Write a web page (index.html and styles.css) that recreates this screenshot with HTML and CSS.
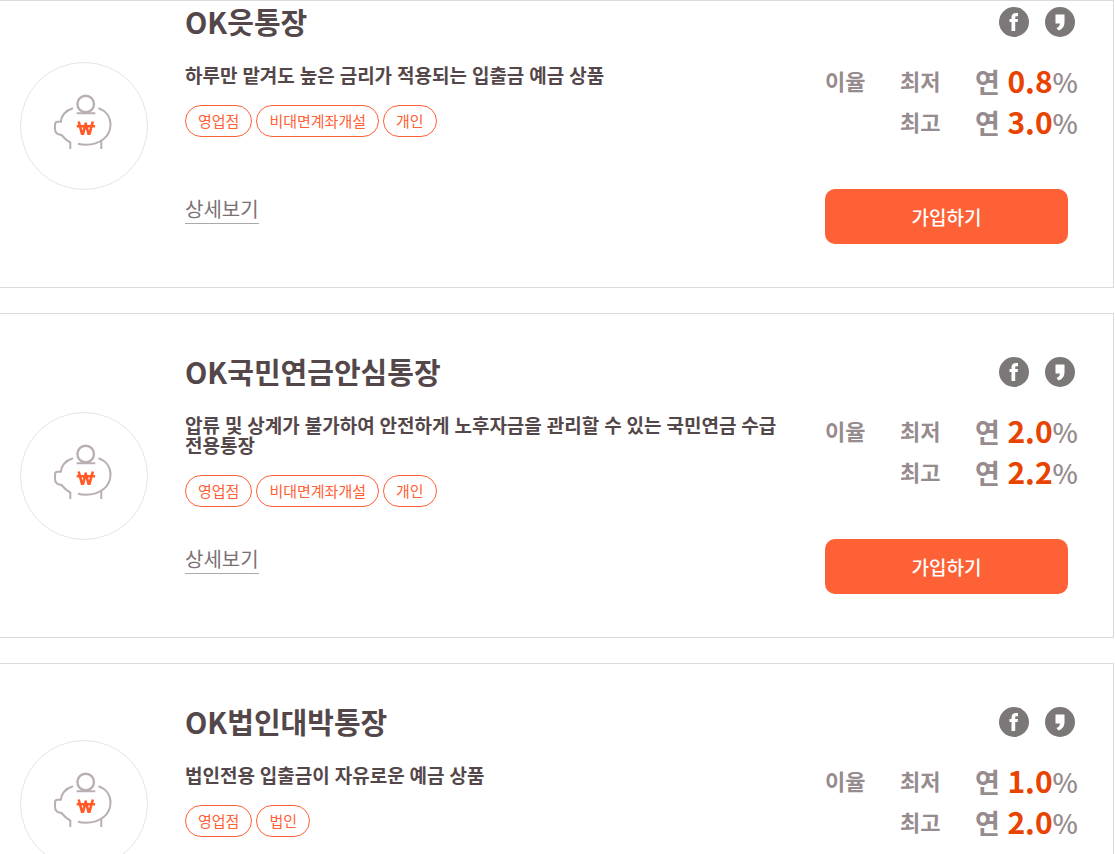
FILE: index.html
```html
<!DOCTYPE html>
<html lang="ko">
  <head>
    <meta charset="utf-8">
    <title>예금 상품</title>
    <link rel="stylesheet" href="styles.css">
  </head>
  <body>
    <svg class="sprite" aria-hidden="true">
      <symbol id="piggy" viewBox="0 0 60 56">
        <g fill="none" stroke="#b9afb0" stroke-width="2">
          <circle cx="32.700" cy="10" r="8.300" stroke-width="2.400"/>
          <path d="M23.700 19.200h18.600M20 14.300C13 16.500 8.500 21.500 7.800 27.800H4.500C2.500 27.800 2 29 2 31v4c0 3.500 2.500 5.500 6.500 6 2.500 3 5 5.500 8.800 7.500V55"/>
          <path d="M45.500 14.300c7.500 2.500 12 8.700 12 16.200C57.500 43 46.500 50.800 33 50.800c-3 0-5.500-.300-8-1M48.300 47v8"/>
        </g>
        <path d="M25.700 27.500l3.300 12.300h1L32.700 29.500 35.500 39.800h1L39.800 27.500M23.700 32.300h18.400" fill="none" stroke="#ff5a28" stroke-width="2.600" stroke-linejoin="round"/>
      </symbol>
      <symbol id="facebook" viewBox="0 0 30 30">
        <circle cx="15" cy="15" r="15" fill="#7d7878"/>
        <path d="M12.500 24v-9H10.500v-3h2v-1.500C12.500 7.500 14 6 17 6h2v3.200h-1.500c-1 0-1.300.400-1.300 1.300V12h2.800l-.400 3h-2.400v9z" fill="#fff"/>
      </symbol>
      <symbol id="story" viewBox="0 0 30 30">
        <circle cx="15" cy="15" r="15" fill="#7d7878"/>
        <path d="M10.500 7.500h9V15c0 4.500-2.500 7.500-6 8.500l-2-2.500c2.200-.800 3.400-2.300 3.500-4.500h-4.500z" fill="#fff"/>
      </symbol>
    </svg>
    <ul class="list">
      <li class="card">
        <div class="thumb"><svg><use href="#piggy"/></svg></div>
        <div class="info">
          <h2>OK읏통장</h2>
          <p class="desc">하루만 맡겨도 높은 금리가 적용되는 입출금 예금 상품</p>
          <div class="tags"><span>영업점</span><span>비대면계좌개설</span><span>개인</span></div>
          <a class="detail" href="#">상세보기</a>
        </div>
        <div class="side">
          <div class="share">
            <a href="#" aria-label="페이스북"><svg><use href="#facebook"/></svg></a>
            <a href="#" aria-label="카카오스토리"><svg><use href="#story"/></svg></a>
          </div>
          <table class="rate">
            <tr><th>이율</th><th>최저</th><td>연 <strong>0.8</strong><span>%</span></td></tr>
            <tr><td></td><th>최고</th><td>연 <strong>3.0</strong><span>%</span></td></tr>
          </table>
          <button type="button" class="join">가입하기</button>
        </div>
      </li>
      <li class="card">
        <div class="thumb"><svg><use href="#piggy"/></svg></div>
        <div class="info">
          <h2>OK국민연금안심통장</h2>
          <p class="desc">압류 및 상계가 불가하여 안전하게 노후자금을 관리할 수 있는 국민연금 수급<br>전용통장</p>
          <div class="tags"><span>영업점</span><span>비대면계좌개설</span><span>개인</span></div>
          <a class="detail" href="#">상세보기</a>
        </div>
        <div class="side">
          <div class="share">
            <a href="#" aria-label="페이스북"><svg><use href="#facebook"/></svg></a>
            <a href="#" aria-label="카카오스토리"><svg><use href="#story"/></svg></a>
          </div>
          <table class="rate">
            <tr><th>이율</th><th>최저</th><td>연 <strong>2.0</strong><span>%</span></td></tr>
            <tr><td></td><th>최고</th><td>연 <strong>2.2</strong><span>%</span></td></tr>
          </table>
          <button type="button" class="join">가입하기</button>
        </div>
      </li>
      <li class="card">
        <div class="thumb"><svg><use href="#piggy"/></svg></div>
        <div class="info">
          <h2>OK법인대박통장</h2>
          <p class="desc">법인전용 입출금이 자유로운 예금 상품</p>
          <div class="tags"><span>영업점</span><span>법인</span></div>
        </div>
        <div class="side">
          <div class="share">
            <a href="#" aria-label="페이스북"><svg><use href="#facebook"/></svg></a>
            <a href="#" aria-label="카카오스토리"><svg><use href="#story"/></svg></a>
          </div>
          <table class="rate">
            <tr><th>이율</th><th>최저</th><td>연 <strong>1.0</strong><span>%</span></td></tr>
            <tr><td></td><th>최고</th><td>연 <strong>2.0</strong><span>%</span></td></tr>
          </table>
        </div>
      </li>
    </ul>
  </body>
</html>
```
FILE: styles.css
```css
* {
  box-sizing: border-box;
}
body {
  margin: 0;
  height: 100vh;
  overflow: hidden;
  color: #54474a;
  font-family: "Noto Sans CJK KR", "Noto Sans", sans-serif;
}
.sprite {
  display: none;
}
h2,
p,
ul {
  margin: 0;
  padding: 0;
}
a {
  color: inherit;
  text-decoration: none;
}
.list {
  list-style: none;
  overflow: hidden;
  margin-right: 1px;
  border-top: 1px solid #dadada;
}
.card {
  display: flex;
  min-height: 281px;
  margin-bottom: 25px;
  padding: 43px 38px 43px 20px;
  border: 1px solid #dadada;
  border-left: 0;
}
/* 첫 카드는 상단이 스크롤되어 가려진 상태 */
.card:first-child {
  margin-top: -38px;
}
.thumb {
  display: flex;
  flex: none;
  align-items: center;
  align-self: center;
  justify-content: center;
  width: 128px;
  height: 128px;
  border: 1px solid #e6e4e4;
  border-radius: 50%;
}
.thumb svg {
  width: 60px;
  height: 56px;
  margin-right: 2px;
  margin-bottom: 8px;
}
.info {
  display: flex;
  flex: 1;
  flex-direction: column;
  align-items: flex-start;
  margin-left: 37px;
}
h2 {
  line-height: 28px;
  font-size: 29px;
  font-weight: 700;
}
.desc {
  margin-top: 31px;
  line-height: 20px;
  font-family: "Noto Sans", "Noto Sans CJK KR", sans-serif;
  font-size: 19px;
  font-weight: 700;
}
.tags {
  display: flex;
  gap: 4px;
  margin-top: 19px;
}
.tags span {
  padding: 0 12px;
  line-height: 30px;
  border: 1px solid #ff6137;
  border-radius: 17px;
  color: #ff6137;
  font-size: 15px;
}
.detail {
  margin-top: auto;
  margin-bottom: 20px;
  line-height: 28px;
  border-bottom: 1px solid #aaa;
  color: #7d7074;
  font-size: 20px;
}
.side {
  flex: none;
  width: 250px;
}
.share {
  display: flex;
  justify-content: flex-end;
  gap: 16px;
}
.share a,
.share svg {
  display: block;
  width: 30px;
  height: 30px;
}
.rate {
  width: 100%;
  margin-top: 23px;
  border-collapse: collapse;
  table-layout: fixed;
  color: #968b8e;
  font-weight: 700;
}
.rate th,
.rate td {
  height: 41px;
  padding: 0;
  line-height: 32px;
  text-align: left;
  white-space: nowrap;
}
.rate th {
  width: 75px;
  padding-bottom: 2px;
  font-size: 22px;
}
.rate td:last-child {
  width: 100px;
  font-size: 27px;
}
.rate strong {
  color: #e84300;
  font-size: 30px;
  font-weight: 700;
}
.rate span {
  font-weight: 500;
}
.join {
  display: block;
  width: 243px;
  height: 55px;
  margin-top: 47px;
  border: 0;
  border-radius: 10px;
  background-color: #ff6137;
  color: #fff;
  font-family: inherit;
  font-size: 19px;
  font-weight: 500;
}
```
